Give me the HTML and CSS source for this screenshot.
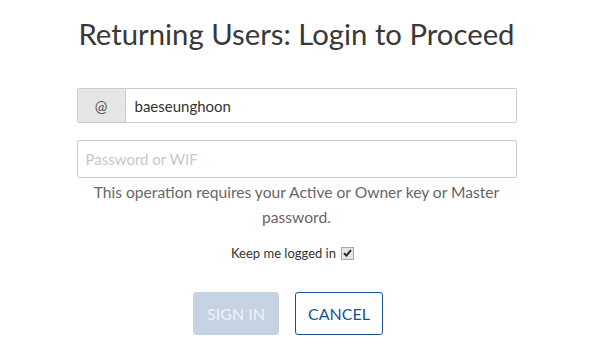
FILE: index.html
```html
<!DOCTYPE html>
<html>
<head>
<meta charset="utf-8">
<link rel="stylesheet" href="styles.css">
</head>
<body>
<div class="login">
  <h1 class="title">Returning Users: Login to Proceed</h1>
  <div class="input-group">
    <span class="addon">@</span>
    <input class="field" type="text" value="baeseunghoon">
  </div>
  <input class="password" type="password" placeholder="Password or WIF">
  <p class="hint">This operation requires your Active or Owner key or Master password.</p>
  <label class="keep">Keep me logged in <span class="check"><svg width="9" height="8" viewBox="0 0 9 8"><path d="M1 4.2 L3.4 6.6 L8 1.2" fill="none" stroke="#222" stroke-width="1.9"/></svg></span></label>
  <div class="buttons">
    <button class="btn btn-primary" disabled>SIGN IN</button>
    <button class="btn btn-hollow">CANCEL</button>
  </div>
</div>
</body>
</html>
```
FILE: styles.css
```css
html, body {
  margin: 0;
  padding: 0;
  background: #fff;
}
body {
  font-family: Lato, "Open Sans", sans-serif;
  color: #333;
}
.login {
  width: 440px;
  margin: 0 auto;
  padding-top: 15px;
  display: flex;
  flex-direction: column;
  align-items: stretch;
}
.title {
  margin: 0 0 35px;
  font-size: 29.3px;
  font-weight: 400;
  line-height: 38px;
  text-align: center;
  color: #383838;
}
.input-group {
  display: flex;
  height: 35px;
  border: 1px solid #ccc;
  border-radius: 2px;
  box-sizing: border-box;
}
.addon {
  width: 47px;
  display: flex;
  align-items: center;
  justify-content: center;
  background: #e6e6e6;
  border-right: 1px solid #ccc;
  color: #555;
  font-size: 15px;
}
.field {
  flex: 1;
  border: 0;
  padding: 0 9px;
  font-family: inherit;
  font-size: 15px;
  color: #333;
  outline: none;
  background: #fff;
  min-width: 0;
}
.password {
  flex: none;
  margin: 17px 0 0;
  height: 38px;
  border: 1px solid #ccc;
  border-radius: 2px;
  box-sizing: border-box;
  padding: 0 8px;
  font-family: inherit;
  font-size: 15px;
  outline: none;
}
.password::placeholder {
  color: #c8c8c8;
}
.hint {
  margin: 2px 0 0;
  font-size: 15.6px;
  line-height: 25px;
  text-align: center;
  color: #666;
}
.keep {
  margin-top: 15px;
  padding-right: 8px;
  display: flex;
  align-items: center;
  justify-content: center;
  gap: 5px;
  font-size: 13px;
  color: #333;
}
.check {
  width: 13px;
  height: 13px;
  box-sizing: border-box;
  border: 1px solid #a8a8a8;
  background: #e4e4e4;
  display: flex;
  align-items: center;
  justify-content: center;
}
.buttons {
  margin-top: 31px;
  padding-right: 17px;
  display: flex;
  justify-content: center;
  gap: 16px;
}
.btn {
  height: 43px;
  padding: 0;
  font-family: inherit;
  font-size: 16px;
  border-radius: 3px;
  box-sizing: border-box;
  white-space: nowrap;
}
.btn-primary {
  width: 86px;
  background: #c5d3e3;
  border: 1px solid #c5d3e3;
  color: #eef2f7;
}
.btn-hollow {
  width: 88px;
  background: #fff;
  border: 1px solid #1a5099;
  color: #1a5099;
}
```
